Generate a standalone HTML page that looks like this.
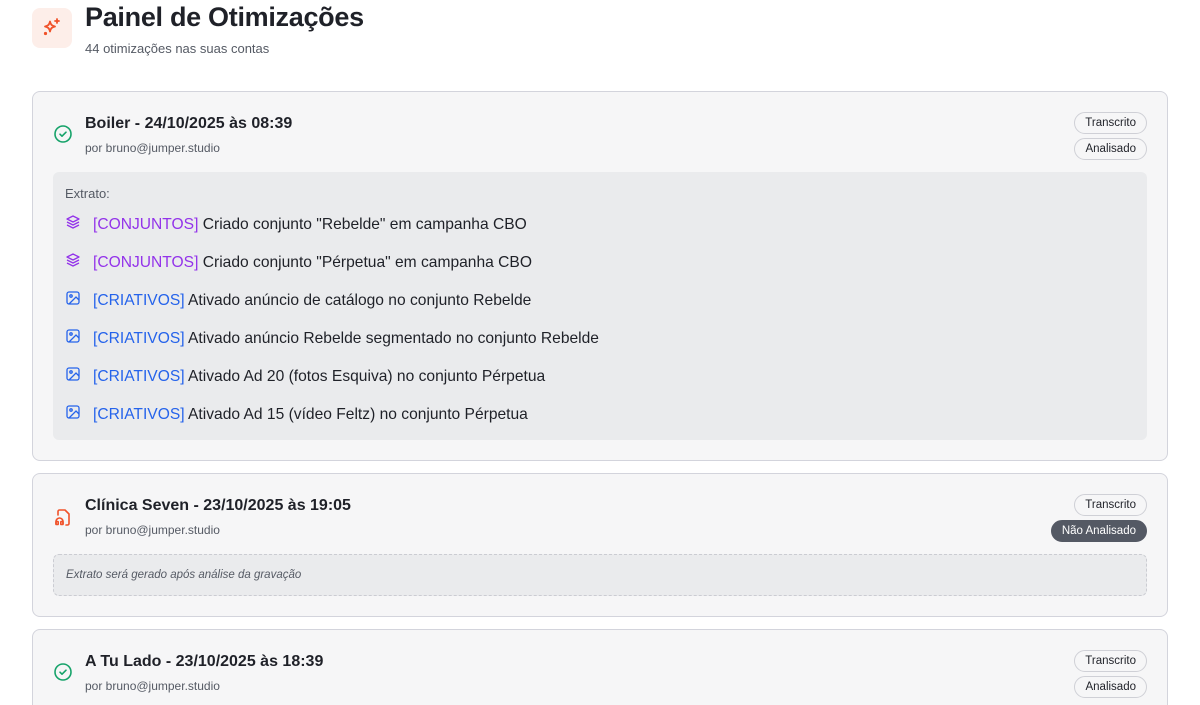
<!DOCTYPE html>
<html><head><meta charset="utf-8"><style>
*{box-sizing:border-box;margin:0;padding:0}
html,body{width:1200px;height:705px;overflow:hidden}
body{background:#fff;font-family:"Liberation Sans",sans-serif;color:#1f2128;position:relative}
.abs{position:absolute}
.logo{left:32px;top:8px;width:40px;height:40px;background:#fdeee9;border-radius:8px}
h1{position:absolute;left:85px;top:2px;font-size:27px;font-weight:bold;letter-spacing:-0.3px;color:#1f2128}
.sub{left:85px;top:41px;font-size:13px;color:#555a64}
.card{position:absolute;left:32px;width:1136px;border:1px solid #d3d4dc;background:#f6f6f7;border-radius:8px}
.ct{position:absolute;left:52px;font-size:16px;font-weight:bold}
.by{position:absolute;left:52px;font-size:12px;color:#555a64}
.badge{position:absolute;right:20px;height:22px;border:1px solid #cfd0d6;border-radius:11px;font-size:11.5px;line-height:20px;padding:0 10px;background:#f6f6f7;color:#1f2128}
.badge.dark{background:#545964;color:#fff;border-color:#545964}
.icon{position:absolute;left:20px}
.ext{position:absolute;left:20px;right:20px;background:#eaebed;border-radius:6px}
.row{position:absolute;left:12px;font-size:15.6px;white-space:nowrap}
.row svg{position:absolute;left:0;top:-1px}
.row span.t{position:absolute;left:28px;top:1px}
.p{color:#9333ea}.b{color:#2563eb}
</style></head><body>
<div class="abs logo"><svg width="40" height="40" viewBox="0 0 40 40" fill="none" stroke="#f0522a" stroke-width="1.8" stroke-linecap="round" stroke-linejoin="round"><path d="M18 13.5c.7 3.2 1.8 4.3 5 5-3.2.7-4.3 1.8-5 5-.7-3.2-1.8-4.3-5-5 3.2-.7 4.3-1.8 5-5z"/><path d="M25 11v4M23 13h4"/><circle cx="13.5" cy="25.5" r=".7" fill="#f0522a"/></svg></div>
<h1>Painel de Otimizações</h1>
<div class="abs sub">44 otimizações nas suas contas</div>

<div class="card" style="top:91px;height:370px">
 <svg class="icon" style="top:32px" width="20" height="20" viewBox="0 0 20 20" fill="none" stroke="#16a36a" stroke-width="1.6"><circle cx="10" cy="10" r="8"/><path d="M7 10.2l2 2 4-4" stroke-linecap="round" stroke-linejoin="round"/></svg>
 <div class="ct" style="top:23px">Boiler - 24/10/2025 às 08:39</div>
 <div class="by" style="top:49px">por bruno@jumper.studio</div>
 <div class="badge" style="top:20px">Transcrito</div>
 <div class="badge" style="top:46px">Analisado</div>
 <div class="ext" style="top:80px;height:268px">
  <div class="row" style="top:14px;font-size:13px;color:#555a64">Extrato:</div>
  <div class="row" style="top:43px"><svg width="16" height="16" viewBox="0 0 16 16" fill="none" stroke="#9333ea" stroke-width="1.3" stroke-linejoin="round"><path d="M8 2l6 3-6 3-6-3z"/><path d="M2 8l6 3 6-3"/><path d="M2 11l6 3 6-3"/></svg><span class="t"><span class="p">[CONJUNTOS]</span> Criado conjunto "Rebelde" em campanha CBO</span></div>
  <div class="row" style="top:81px"><svg width="16" height="16" viewBox="0 0 16 16" fill="none" stroke="#9333ea" stroke-width="1.3" stroke-linejoin="round"><path d="M8 2l6 3-6 3-6-3z"/><path d="M2 8l6 3 6-3"/><path d="M2 11l6 3 6-3"/></svg><span class="t"><span class="p">[CONJUNTOS]</span> Criado conjunto "Pérpetua" em campanha CBO</span></div>
  <div class="row" style="top:119px"><svg width="16" height="16" viewBox="0 0 16 16" fill="none" stroke="#2563eb" stroke-width="1.3"><rect x="2" y="2" width="12" height="12" rx="2"/><circle cx="6" cy="6" r="1.2"/><path d="M14 10l-3-3-7 7"/></svg><span class="t"><span class="b">[CRIATIVOS]</span> Ativado anúncio de catálogo no conjunto Rebelde</span></div>
  <div class="row" style="top:157px"><svg width="16" height="16" viewBox="0 0 16 16" fill="none" stroke="#2563eb" stroke-width="1.3"><rect x="2" y="2" width="12" height="12" rx="2"/><circle cx="6" cy="6" r="1.2"/><path d="M14 10l-3-3-7 7"/></svg><span class="t"><span class="b">[CRIATIVOS]</span> Ativado anúncio Rebelde segmentado no conjunto Rebelde</span></div>
  <div class="row" style="top:195px"><svg width="16" height="16" viewBox="0 0 16 16" fill="none" stroke="#2563eb" stroke-width="1.3"><rect x="2" y="2" width="12" height="12" rx="2"/><circle cx="6" cy="6" r="1.2"/><path d="M14 10l-3-3-7 7"/></svg><span class="t"><span class="b">[CRIATIVOS]</span> Ativado Ad 20 (fotos Esquiva) no conjunto Pérpetua</span></div>
  <div class="row" style="top:233px"><svg width="16" height="16" viewBox="0 0 16 16" fill="none" stroke="#2563eb" stroke-width="1.3"><rect x="2" y="2" width="12" height="12" rx="2"/><circle cx="6" cy="6" r="1.2"/><path d="M14 10l-3-3-7 7"/></svg><span class="t"><span class="b">[CRIATIVOS]</span> Ativado Ad 15 (vídeo Feltz) no conjunto Pérpetua</span></div>
 </div>
</div>

<div class="card" style="top:473px;height:144px">
 <svg class="icon" style="top:33px" width="20" height="20" viewBox="0 0 20 20" fill="none" stroke="#f0522a" stroke-width="1.6" stroke-linecap="round" stroke-linejoin="round"><path d="M5 8V4.5A1.5 1.5 0 0 1 6.5 3H12l4 4v9.5a1.5 1.5 0 0 1-1.5 1.5H13"/><path d="M3 17v-2.5a3.5 3.5 0 0 1 7 0V17"/><rect x="3" y="14.5" width="2.2" height="3" rx=".5"/><rect x="7.8" y="14.5" width="2.2" height="3" rx=".5"/></svg>
 <div class="ct" style="top:23px">Clínica Seven - 23/10/2025 às 19:05</div>
 <div class="by" style="top:49px">por bruno@jumper.studio</div>
 <div class="badge" style="top:20px">Transcrito</div>
 <div class="badge dark" style="top:46px">Não Analisado</div>
 <div class="ext" style="top:80px;height:42px;border:1px dashed #cbccd2;font-size:11.5px;font-style:italic;color:#555a64;padding:14px 12px">Extrato será gerado após análise da gravação</div>
</div>

<div class="card" style="top:629px;height:120px">
 <svg class="icon" style="top:32px" width="20" height="20" viewBox="0 0 20 20" fill="none" stroke="#16a36a" stroke-width="1.6"><circle cx="10" cy="10" r="8"/><path d="M7 10.2l2 2 4-4" stroke-linecap="round" stroke-linejoin="round"/></svg>
 <div class="ct" style="top:23px">A Tu Lado - 23/10/2025 às 18:39</div>
 <div class="by" style="top:49px">por bruno@jumper.studio</div>
 <div class="badge" style="top:20px">Transcrito</div>
 <div class="badge" style="top:46px">Analisado</div>
</div>
</body></html>
